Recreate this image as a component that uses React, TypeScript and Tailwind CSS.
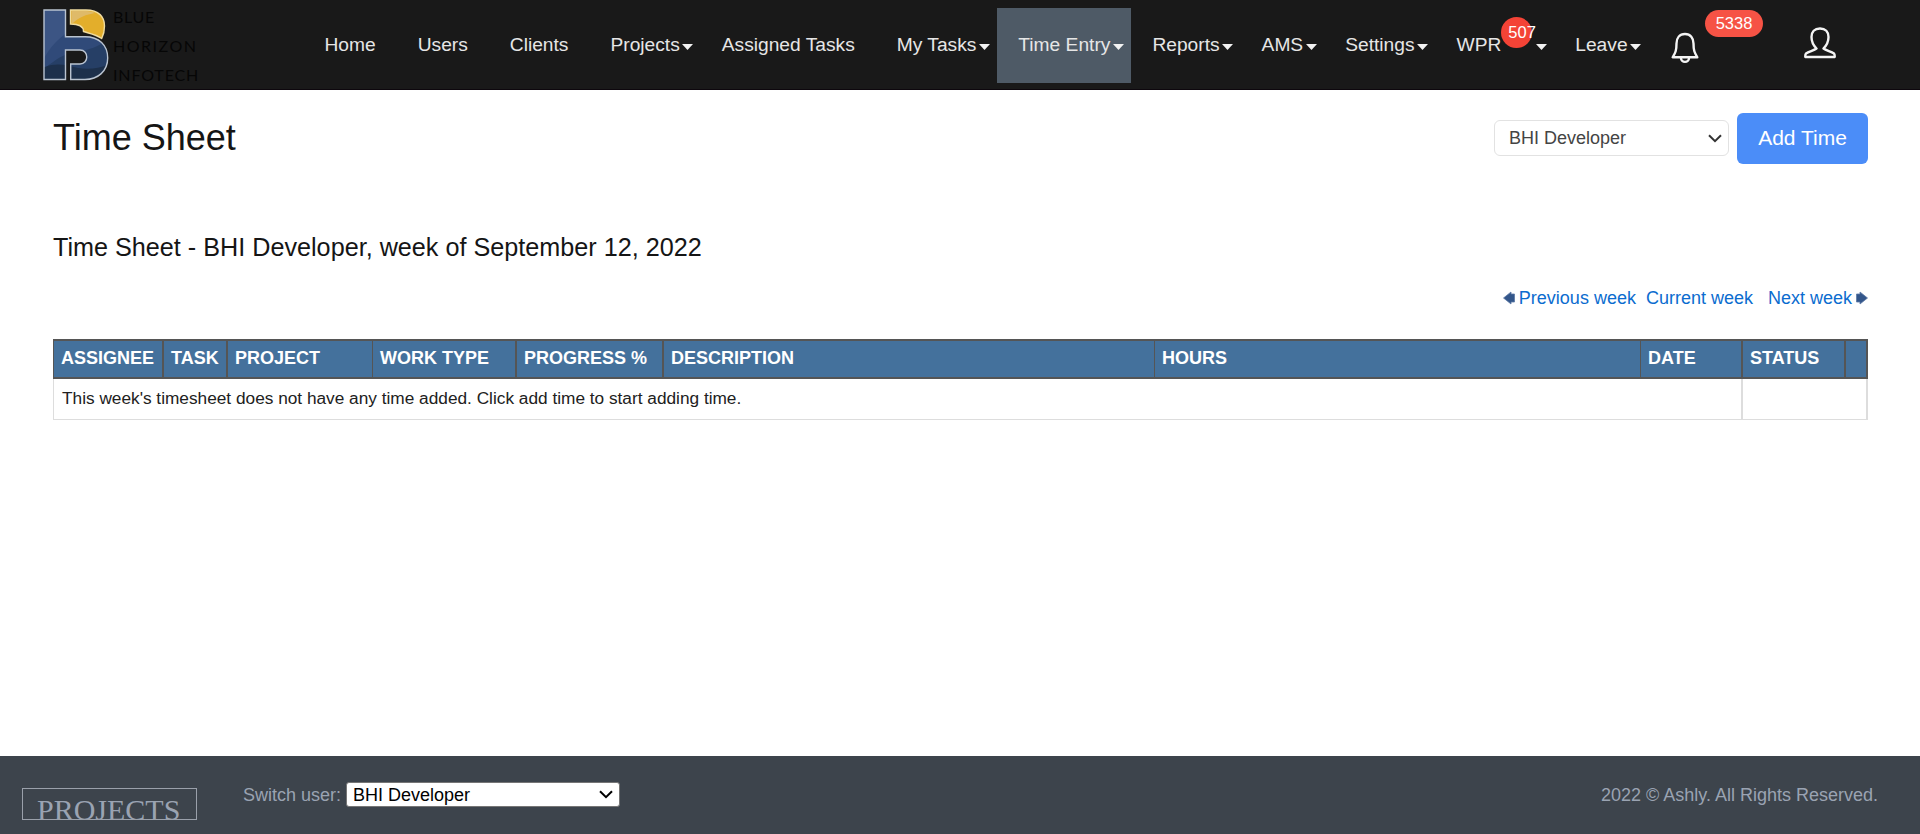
import React from "react";

type NavItem = { label: string; caret?: boolean; active?: boolean; badge?: string };

const NAV: NavItem[] = [
  { label: "Home" },
  { label: "Users" },
  { label: "Clients" },
  { label: "Projects", caret: true },
  { label: "Assigned Tasks" },
  { label: "My Tasks", caret: true },
  { label: "Time Entry", caret: true, active: true },
  { label: "Reports", caret: true },
  { label: "AMS", caret: true },
  { label: "Settings", caret: true },
  { label: "WPR", caret: true, badge: "507" },
  { label: "Leave", caret: true },
];

const COLUMNS = [
  { label: "ASSIGNEE", edge: "border-r-2" },
  { label: "TASK", edge: "border-r-2" },
  { label: "PROJECT", edge: "border-r" },
  { label: "WORK TYPE", edge: "border-r-2" },
  { label: "PROGRESS %", edge: "border-r-2" },
  { label: "DESCRIPTION", edge: "border-r" },
  { label: "HOURS", edge: "border-r" },
  { label: "DATE", edge: "border-r-2" },
  { label: "STATUS", edge: "border-r-2" },
  { label: "", edge: "border-r-2" },
];

const LOGO_B =
  "M2 2H23.5V28.700H43C57 28.700 65.700 37 65.700 50C65.700 63 56 71.500 43 71.500H28.700V56H38C47 56 47 42 38 42H23.500V71.500H2Z";

function Logo() {
  return (
    <div className="flex h-[78px] w-[262px] shrink-0 pl-[42px] pt-2">
      <svg width="68" height="74" viewBox="0 0 68 74" className="shrink-0">
        <clipPath id="logo-b">
          <path d={LOGO_B} />
        </clipPath>
        <g clipPath="url(#logo-b)">
          <rect width="68" height="74" fill="#3c5584" />
          <path d="M0 54C6 42 14 32 26 24H68V74H0Z" fill="#304a79" />
          <path d="M0 62C14 52 20 46 34 44C48 42 58 38 68 30V74H0Z" fill="#263f66" />
          <path d="M0 60C14 54 24 57 36 60C48 62 58 60 68 56V74H0Z" fill="#1d304b" />
        </g>
        <path d={LOGO_B} fill="none" stroke="#b9c3d0" strokeWidth="1.400" />
        <path
          d="M28.500 2H44C57 2 62.500 9 62.500 18C62.500 23 61.500 27 59.700 30.500C54 26.500 48 25.500 41.500 23.500C41.500 18.500 38 16 28.500 16Z"
          fill="#e3ae2b"
          stroke="#f0dca0"
          strokeWidth="1.400"
        />
        <path d="M29.500 3H44C48 3 51 4 53 5C44 6.500 37 9.500 31 15H29.500Z" fill="#dfba69" />
      </svg>
      <div className="-mt-[6px] flex flex-col pl-[3px] font-['Lato','Open_Sans',sans-serif] text-[16px] leading-[29px] text-[#060606]">
        <span className="tracking-[0.700px]">BLUE</span>
        <span className="tracking-[1.500px]">HORIZON</span>
        <span className="tracking-[0.850px]">INFOTECH</span>
      </div>
    </div>
  );
}

function Caret() {
  return (
    <svg width="11" height="6" viewBox="0 0 11 6" className="shrink-0">
      <path d="M0 0H11L5.500 6Z" fill="#f2f2f2" />
    </svg>
  );
}

function NavEntry({ item }: { item: NavItem }) {
  return (
    <a
      className={
        item.active
          ? "flex h-[75px] shrink-0 items-center bg-[#4e5a66] pl-[21px]"
          : "flex h-[75px] shrink-0 items-center pl-[21px]"
      }
    >
      <span>{item.label}</span>
      {item.badge && (
        <span className="relative h-[75px] w-[32px]">
          <span className="absolute left-0 top-[9px] flex h-[31px] w-[31px] items-center rounded-full bg-[#f44336] pl-[7px] text-[16.500px] text-white">
            {item.badge}
          </span>
        </span>
      )}
      <span className="flex w-[21px] pl-[2.500px] pt-[3px]">{item.caret && <Caret />}</span>
    </a>
  );
}

function Header() {
  return (
    <header className="flex h-[90px] border-b border-[#0d070d] bg-[#191919]">
      <Logo />
      <nav className="flex w-[1400px] shrink-0 whitespace-nowrap pl-[41.500px] pt-2 text-[19.200px] text-[#e6e6e6]">
        {NAV.map((item) => (
          <NavEntry key={item.label} item={item} />
        ))}
      </nav>
      <div className="flex pl-[9px]">
        <svg width="28" height="32" viewBox="0 0 28 32" className="mt-8" fill="none" stroke="#f4f4f4" strokeWidth="2.400" strokeLinejoin="round">
          <path d="M14 2C8.500 2 5.500 6 5.500 11.500C5.500 18.500 4.500 20.500 1.700 25.300H26.300C23.500 20.500 22.500 18.500 22.500 11.500C22.500 6 19.500 2 14 2Z" />
          <path d="M10 26C10 31.200 18 31.200 18 26" />
        </svg>
        <span className="ml-[6px] mt-[10px] flex h-[27px] w-[58px] items-center justify-center rounded-full bg-[#f65345] text-[16.500px] text-white">
          5338
        </span>
        <svg width="32" height="32" viewBox="0 0 32 32" className="ml-[41px] mt-[27px]" fill="none" stroke="#f4f4f4" strokeWidth="2.400" strokeLinejoin="round">
          <path d="M16 1.500C10.500 1.500 7.500 5 7.500 10C7.500 15 9.500 18.500 12.500 21.500C10 23.500 5 24.500 2 26.500C1.200 27.500 1.200 28.500 1.300 30H30.700C30.800 28.500 30.800 27.500 30 26.500C27 24.500 22 23.500 19.500 21.500C22.500 18.500 24.500 15 24.500 10C24.500 5 21.500 1.500 16 1.500Z" />
        </svg>
      </div>
    </header>
  );
}

function Chevron({ color }: { color: string }) {
  return (
    <svg width="14" height="9" viewBox="0 0 14 9" fill="none" stroke={color} strokeWidth="2">
      <path d="M1 1.200L7 7.200L13 1.200" />
    </svg>
  );
}

function WeekArrow({ left }: { left?: boolean }) {
  return (
    <svg width="12" height="14" viewBox="0 0 12 14" className={left ? "rotate-180" : ""}>
      <path d="M0.500 3H4V1L11.500 7L4 13V11H0.500Z" fill="#33568a" stroke="#5d7aa6" strokeWidth="0.800" />
    </svg>
  );
}

function TimeTable() {
  return (
    <section className="mt-[30px] w-[1815px]">
      <div className="grid h-10 grid-cols-[110px_64px_145px_144px_147px_491px_486px_102px_103px_22px] border-y-2 border-l border-[#555555] bg-[#44719c] text-[18px] font-bold leading-[35px] text-white">
        {COLUMNS.map((column, index) => (
          <div
            key={index}
            className={`${column.edge} whitespace-nowrap border-[#555555] pl-[7px]`}
          >
            {column.label}
          </div>
        ))}
      </div>
      <div className="flex h-[41px] border-b border-l border-[#dddddd] text-[17.250px] leading-[39px] text-[#212121]">
        <div className="w-[1689px] border-r-2 border-[#dddddd] pl-2">
          This week's timesheet does not have any time added. Click add time to start adding time.
        </div>
        <div className="flex-1 border-r-2 border-[#dddddd]" />
      </div>
    </section>
  );
}

function Footer() {
  return (
    <footer className="flex h-[78px] items-start bg-[#3d444c] text-[18px] text-[#9aa3b2]">
      <div className="ml-[22px] mt-8 h-8 w-[175px] overflow-hidden border border-[#9aa0aa] pl-[14px] pt-[4px] font-['Liberation_Serif',serif] text-[30px] leading-[33px]">
        PROJECTS
      </div>
      <label className="ml-[46px] mt-[25px] leading-[28px]">Switch user:</label>
      <div className="ml-[5px] mt-[26px] flex h-[25px] w-[274px] items-center justify-between rounded-[3px] border border-[#767676] bg-white pl-[6px] pr-[6px] text-black">
        <span className="leading-[24px]">BHI Developer</span>
        <Chevron color="#000000" />
      </div>
      <p className="ml-auto mr-[42px] mt-[25px] leading-[28px]">2022 © Ashly. All Rights Reserved.</p>
    </footer>
  );
}

export default function App() {
  return (
    <div className="flex h-[834px] w-[1920px] flex-col overflow-hidden bg-white font-['Liberation_Sans',Arial,sans-serif]">
      <Header />
      <main className="flex flex-1 flex-col pl-[53px] pr-[52px] pt-[23px] text-[#151515]">
        <div className="flex h-[51px] items-center">
          <h1 className="pb-[2px] text-[36px] leading-none">Time Sheet</h1>
          <div className="mb-[1px] ml-auto mr-2 flex h-9 w-[235px] items-center justify-between rounded-md border border-[#e2e2e2] pl-[14px] pr-[6px] text-[18px] text-[#444444]">
            <span>BHI Developer</span>
            <Chevron color="#333333" />
          </div>
          <button className="h-[51px] w-[131px] rounded-md bg-[#4b8df8] pb-[1px] text-[21px] text-white">
            Add Time
          </button>
        </div>
        <h2 className="mt-[68px] text-[25.200px] leading-[30px]">
          Time Sheet - BHI Developer, week of September 12, 2022
        </h2>
        <div className="mt-[25px] flex h-[22px] items-center justify-end text-[18px] text-[#0b6ccf]">
          <WeekArrow left />
          <a className="ml-1">Previous week</a>
          <a className="ml-[10px]">Current week</a>
          <a className="ml-[15px] mr-1">Next week</a>
          <WeekArrow />
        </div>
        <TimeTable />
      </main>
      <Footer />
    </div>
  );
}
